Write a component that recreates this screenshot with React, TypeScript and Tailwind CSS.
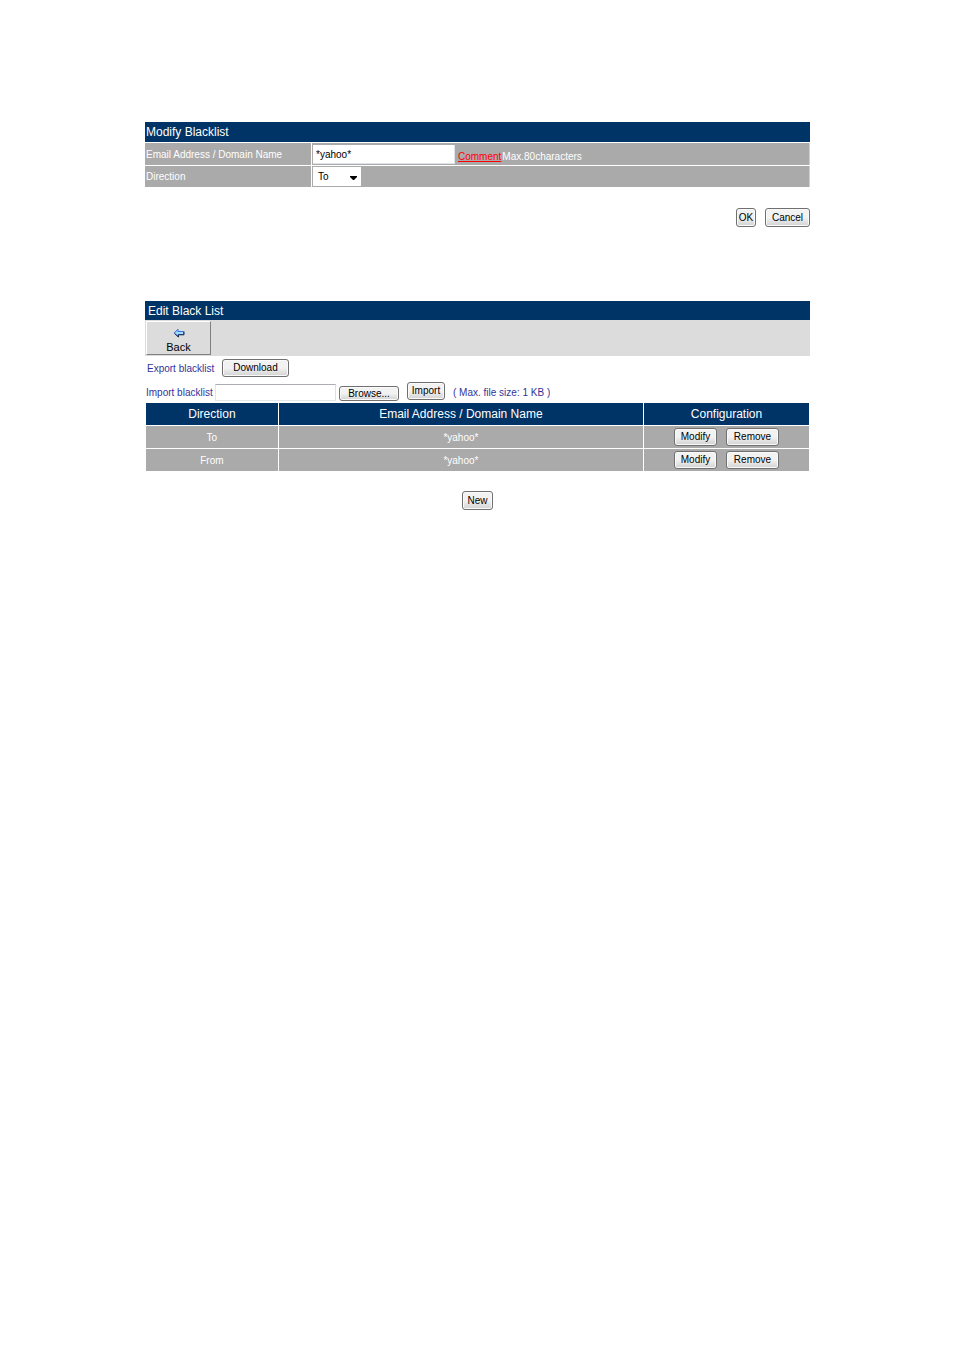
import type { ReactNode } from "react";

const entries = [
  { direction: "To", address: "*yahoo*" },
  { direction: "From", address: "*yahoo*" },
];

const Button = ({ children, className = "" }: { children: ReactNode; className?: string }) => {
  return (
    <button
      type="button"
      className={`flex shrink-0 items-center justify-center rounded-[3px] border border-[#707070] bg-linear-to-b from-[#f2f2f2] from-50% to-[#d2d2d2] text-[10px] leading-3 text-black shadow-[inset_0_0_0_1px_#fafafa] ${className}`}
    >
      {children}
    </button>
  );
};

const BackIcon = () => {
  return (
    <svg width="12" height="10" viewBox="0 0 12 10" aria-hidden="true">
      <path d="M5 1.2V3.5H10.5V6.5H5V8.8L1.2 5z" fill="#8fd0ff" stroke="#3a6fd8" />
      <path d="M1.5 5.5L5.5 9V6.8H11V3.5" fill="none" stroke="#1c2c50" />
      <path d="M3.5 5h6.5" stroke="#a8ecff" />
    </svg>
  );
};

const ModifyBlacklist = () => {
  return (
    <form>
      <h2 className="h-5 bg-[#003366] px-px text-xs leading-5 text-white">Modify Blacklist</h2>
      <div className="mt-px flex gap-px text-[10px] text-white">
        <label htmlFor="address" className="flex h-[22px] w-[166px] items-center bg-[#aaaaaa] px-px">
          Email Address / Domain Name
        </label>
        <div className="flex flex-1 items-center border-r border-[#d0d0d0] bg-[#aaaaaa] pl-px">
          <input
            id="address"
            type="text"
            defaultValue="*yahoo*"
            className="h-[19px] w-[142px] border-r border-b border-[#dfe3ea] bg-white px-[3px] pt-px text-black outline-none"
          />
          <a href="#comment" className="ml-[3px] pt-1 text-[#ff0000] underline">
            Comment
          </a>
          <span className="ml-px pt-1">Max.80characters</span>
        </div>
      </div>
      <div className="mt-px flex gap-px text-[10px] text-white">
        <label htmlFor="direction" className="flex h-[21px] w-[166px] items-center bg-[#aaaaaa] px-px">
          Direction
        </label>
        <div className="flex flex-1 items-center border-r border-[#d0d0d0] bg-[#aaaaaa] pl-px">
          <div className="relative">
            <select
              id="direction"
              defaultValue="To"
              className="block h-[19px] w-12 appearance-none bg-white px-[5px] text-black outline-none"
            >
              <option>To</option>
              <option>From</option>
            </select>
            <svg
              width="7"
              height="4"
              viewBox="0 0 7 4"
              className="pointer-events-none absolute top-[9px] right-1"
              aria-hidden="true"
            >
              <path d="M0 0h7v1L4 4H3L0 1z" fill="#000" />
            </svg>
          </div>
        </div>
      </div>
      <div className="mt-[21px] flex justify-end gap-[9px]">
        <Button className="h-[19px] w-5">OK</Button>
        <Button className="h-[19px] w-[45px]">Cancel</Button>
      </div>
    </form>
  );
};

const EditBlackList = () => {
  return (
    <section>
      <h2 className="h-[19px] bg-[#003366] px-[3px] text-xs leading-5 text-white">Edit Black List</h2>
      <div className="flex h-9 items-center bg-[#dcdcdc] pl-px">
        <button
          type="button"
          className="flex h-[34px] w-[65px] flex-col items-center justify-end border border-t-white border-r-[#808080] border-b-[#808080] border-l-white text-[11px] leading-[13px] text-black"
        >
          <BackIcon />
          <span className="mt-[3px]">Back</span>
        </button>
      </div>

      <div className="mt-[3px] flex h-[18px] items-center px-0.5 text-[10px] text-[#333399]">
        <span className="w-[75px]">Export blacklist</span>
        <Button className="h-[18px] w-[67px]">Download</Button>
      </div>
      <div className="mt-[5px] flex h-[19px] items-end px-px text-[10px] text-[#333399]">
        <label htmlFor="file" className="w-[69px] leading-4">
          Import blacklist
        </label>
        <input
          id="file"
          type="text"
          className="h-[17px] w-[121px] border border-t-[#abadb3] border-r-[#dbdfe6] border-b-[#e3e9ef] border-l-[#e2e3ea] px-0.5 text-black outline-none"
        />
        <Button className="ml-[3px] h-[15px] w-[60px]">Browse...</Button>
        <Button className="ml-2 h-[18px] w-[38px] self-start">Import</Button>
        <span className="ml-2 leading-4">( Max. file size: 1 KB )</span>
      </div>

      <table className="mt-px w-full table-fixed border-collapse text-center text-white">
        <thead>
          <tr className="h-[23px] bg-[#003366] text-xs">
            <th className="w-1/5 border border-white p-0 font-normal">Direction</th>
            <th className="w-[55%] border border-white p-0 font-normal">Email Address / Domain Name</th>
            <th className="w-1/4 border border-white p-0 font-normal">Configuration</th>
          </tr>
        </thead>
        <tbody>
          {entries.map((entry) => (
            <tr key={entry.direction} className="h-[23px] bg-[#aaaaaa] text-[10px]">
              <td className="border border-white p-0">{entry.direction}</td>
              <td className="border border-white p-0">{entry.address}</td>
              <td className="border border-white p-0">
                <div className="flex justify-center gap-[9px]">
                  <Button className="h-[18px] w-[43px]">Modify</Button>
                  <Button className="h-[18px] w-[53px]">Remove</Button>
                </div>
              </td>
            </tr>
          ))}
        </tbody>
      </table>

      <div className="mt-[19px] flex justify-center">
        <Button className="h-[19px] w-[31px]">New</Button>
      </div>
    </section>
  );
};

export default function App() {
  return (
    <main className="flex min-h-screen flex-col gap-[74px] bg-white pt-[122px] pr-36 pl-[145px] font-['Liberation_Sans',Arial,sans-serif]">
      <ModifyBlacklist />
      <EditBlackList />
    </main>
  );
}
